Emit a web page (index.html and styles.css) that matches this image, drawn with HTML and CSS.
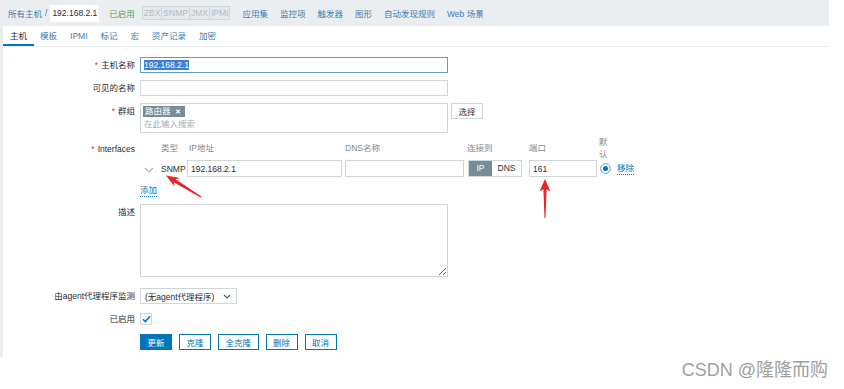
FILE: index.html
```html
<!DOCTYPE html>
<html lang="zh-CN">
<head>
  <meta charset="UTF-8">
  <title>主机 - 192.168.2.1</title>
  <link rel="stylesheet" href="styles.css">
</head>
<body>
  <div class="page">
    <div class="crumbs">
      <span class="crumb-path">
        <a class="link">所有主机</a>
        <span class="sep">/</span>
        <span class="crumb-current">192.168.2.1</span>
      </span>
      <span class="status-on">已启用</span>
      <span class="avail">
        <span>ZBX</span><span>SNMP</span><span>JMX</span><span>IPMI</span>
      </span>
      <a class="link first-link">应用集</a>
      <a class="link">监控项</a>
      <a class="link">触发器</a>
      <a class="link">图形</a>
      <a class="link">自动发现规则</a>
      <a class="link">Web 场景</a>
    </div>

    <div class="main">
      <div class="panel">
        <ul class="tabs">
          <li class="tab active">主机</li>
          <li class="tab">模板</li>
          <li class="tab">IPMI</li>
          <li class="tab">标记</li>
          <li class="tab">宏</li>
          <li class="tab">资产记录</li>
          <li class="tab">加密</li>
        </ul>

        <form class="form">
          <label class="label req">主机名称</label>
          <div class="input focused"><span class="selected">192.168.2.1</span></div>

          <label class="label">可见的名称</label>
          <input class="input" type="text" value="">

          <label class="label req">群组</label>
          <div class="group-field">
            <div class="multi">
              <span class="tag">路由器 <b>✕</b></span>
              <span class="placeholder">在此输入搜索</span>
            </div>
            <button type="button" class="btn-grey">选择</button>
          </div>

          <label class="label req iface-label">Interfaces</label>
          <div class="ifaces">
            <span></span>
            <span class="head">类型</span>
            <span class="head head-ip">IP地址</span>
            <span class="head">DNS名称</span>
            <span class="head">连接到</span>
            <span class="head">端口</span>
            <span class="head head-default">默认</span>
            <span></span>

            <span class="chevron">
              <svg width="10" height="6" viewBox="0 0 10 6"><path d="M1 1l4 4 4-4" fill="none" stroke="#a6b1b7" stroke-width="1.2"/></svg>
            </span>
            <span class="type">SNMP</span>
            <input class="input cell" type="text" value="192.168.2.1">
            <input class="input cell" type="text" value="">
            <span class="toggle"><span class="on">IP</span><span class="off">DNS</span></span>
            <input class="input cell" type="text" value="161">
            <span class="radio"></span>
            <a class="action">移除</a>

            <a class="action add">添加</a>
          </div>

          <label class="label">描述</label>
          <textarea class="textarea"></textarea>

          <label class="label proxy-label">由agent代理程序监测</label>
          <div class="select proxy-select">
            <span>(无agent代理程序)</span>
            <svg width="8" height="5" viewBox="0 0 8 5"><path d="M1 1l3 3 3-3" fill="none" stroke="#4f5a60" stroke-width="1.1"/></svg>
          </div>

          <label class="label">已启用</label>
          <div class="check-row">
            <span class="checkbox">
              <svg width="9" height="8" viewBox="0 0 9 8"><path d="M1 4.2l2.4 2.4L8 1.3" fill="none" stroke="#0275b8" stroke-width="1.6"/></svg>
            </span>
          </div>

          <span></span>
          <div class="buttons">
            <button type="button" class="btn primary">更新</button>
            <button type="button" class="btn">克隆</button>
            <button type="button" class="btn">全克隆</button>
            <button type="button" class="btn">删除</button>
            <button type="button" class="btn">取消</button>
          </div>
        </form>
      </div>
    </div>
  </div>

  <div class="watermark">CSDN @隆隆而购</div>

  <!-- annotation arrows drawn over the screenshot -->
  <svg class="arrows" width="844" height="389" viewBox="0 0 844 389">
    <polygon fill="#e8252b" points="166,175.5 179.8,178 175.6,179.3 201.4,196.6 200.6,197.4 173.7,182.2 174.6,186.6"/>
    <polygon fill="#e8252b" points="545,179 550.5,191.5 546.6,189.3 545.5,218 544.5,218 543.4,189.3 539.5,191.5"/>
  </svg>
</body>
</html>
```

FILE: styles.css
```css
* {
  margin: 0;
  padding: 0;
  box-sizing: border-box;
}

body {
  font-family: "Liberation Sans", "Noto Sans CJK SC", sans-serif;
  font-size: 8.5px;
  color: #1f2c33;
  background: #fff;
  position: relative;
}

a {
  cursor: pointer;
}

.page {
  width: 829px;
  height: 357px;
  background: #ebeef0;
  display: flex;
  flex-direction: column;
}

/* Breadcrumb bar */
.crumbs {
  height: 26px;
  display: flex;
  align-items: center;
  gap: 12px;
  padding-left: 8px;
  white-space: nowrap;
}

.link {
  color: #3f7cb0;
}

.crumb-path {
  display: flex;
  align-items: center;
  gap: 3px;
}

.sep {
  color: #5b6a72;
}

.crumb-current {
  background: #fff;
  height: 17px;
  line-height: 17px;
  padding: 0 2px;
  color: #1f2c33;
}

.status-on {
  color: #4e9f52;
  margin-left: -2px;
}

.avail {
  display: flex;
  border: 1px solid #cfd6da;
  margin-left: -5px;
}

.avail span {
  color: #b3bcc1;
  background: #e6e9eb;
  padding: 0 1px;
  line-height: 12px;
  border-left: 1px solid #cfd6da;
}

.avail span:first-child {
  border-left: none;
}

/* Main panel */
.main {
  flex: 1;
  display: flex;
  padding-left: 3px;
}

.panel {
  flex: 1;
  background: #fff;
}

.tabs {
  list-style: none;
  display: flex;
  border-bottom: 1px solid #ebeef0;
  height: 21px;
}

.tab {
  padding: 0 6.5px;
  line-height: 20px;
  height: 20px;
  color: #3f7cb0;
}

.tab.active {
  color: #1f2c33;
  padding-left: 7px;
  border-bottom: 2px solid #0275b8;
}

/* Form */
.form {
  display: grid;
  grid-template-columns: 132px 1fr;
  column-gap: 5px;
  row-gap: 7px;
  padding-top: 10px;
  align-items: start;
}

.label {
  text-align: right;
  line-height: 16px;
  white-space: nowrap;
}

.req::before {
  content: "*";
  color: #e33734;
  margin-right: 3px;
}

.input {
  display: block;
  width: 308px;
  height: 16px;
  border: 1px solid #cfd6da;
  padding: 0 3px;
  font: inherit;
  line-height: 14px;
  color: #1f2c33;
  background: #fff;
  outline: none;
}

.input.focused {
  border-color: #5b9ccb;
}

.selected {
  background: #3d80d6;
  color: #fff;
}

.group-field {
  display: flex;
  gap: 3px;
  align-items: flex-start;
}

.multi {
  width: 308px;
  height: 30px;
  border: 1px solid #cfd6da;
  padding: 2px 2px 0;
  display: flex;
  flex-direction: column;
  align-items: flex-start;
}

.tag {
  background: #768d99;
  color: #fff;
  line-height: 11px;
  padding: 0 4px 0 2px;
}

.tag b {
  font-size: 7px;
  margin-left: 2px;
}

.placeholder {
  color: #a3adb3;
  line-height: 13px;
  margin-top: 1px;
  padding-left: 1px;
}

.btn-grey {
  width: 32px;
  height: 16px;
  font: inherit;
  color: #1f2c33;
  background: #fff;
  border: 1px solid #cfd6da;
}

/* Interfaces table */
.iface-label {
  line-height: 24px;
  margin-top: -3px;
}

.ifaces {
  display: grid;
  grid-template-columns: 18px 23px 155px 119px 59px 68px 14px auto;
  column-gap: 3px;
  align-items: center;
  margin-top: -4px;
}

.head {
  color: #7d8b92;
  line-height: 12px;
}

.head-ip {
  padding-left: 2px;
}

.head-default {
  margin-left: -1px;
}

.chevron {
  display: flex;
  justify-content: center;
  padding-top: 2px;
}

.type {
  color: #1f2c33;
}

.input.cell {
  width: 100%;
  height: 17px;
  line-height: 15px;
}

.toggle {
  display: flex;
  width: 54px;
  height: 17px;
  margin-left: 1px;
  border: 1px solid #cfd6da;
}

.toggle span {
  line-height: 15px;
  text-align: center;
}

.toggle .on {
  width: 23px;
  background: #768d99;
  color: #fff;
}

.toggle .off {
  flex: 1;
  color: #1f2c33;
}

.radio {
  width: 11px;
  height: 11px;
  border-radius: 50%;
  border: 1px solid #acbbc2;
  background: #0275b8;
  box-shadow: inset 0 0 0 2px #fff;
}

.action {
  color: #0275b8;
  border-bottom: 1px dotted #0275b8;
  line-height: 11px;
  justify-self: start;
}

.add {
  grid-column: 1 / span 3;
  margin-top: 8px;
}

.textarea {
  width: 308px;
  height: 73px;
  border: 1px solid #cfd6da;
  resize: both;
  font: inherit;
  outline: none;
}

.proxy-label,
.proxy-select {
  margin-top: 4px;
}

.select {
  width: 97px;
  height: 16px;
  border: 1px solid #cfd6da;
  display: flex;
  align-items: center;
  justify-content: space-between;
  padding: 0 5px 0 4px;
}

.check-row {
  height: 16px;
  display: flex;
  align-items: center;
}

.checkbox {
  width: 12px;
  height: 12px;
  border: 1px solid #cfd6da;
  display: flex;
  align-items: center;
  justify-content: center;
}

.buttons {
  display: flex;
  gap: 7px;
}

.btn {
  height: 16px;
  padding: 0 6.5px;
  font: inherit;
  color: #0275b8;
  background: #fff;
  border: 1px solid #0275b8;
}

.btn.primary {
  background: #0275b8;
  color: #fff;
}

.watermark {
  width: 844px;
  text-align: right;
  padding-right: 16px;
  font-size: 18px;
  line-height: 26px;
  color: #a0a0a0;
}

.arrows {
  position: absolute;
  top: 0;
  left: 0;
  pointer-events: none;
}
```
